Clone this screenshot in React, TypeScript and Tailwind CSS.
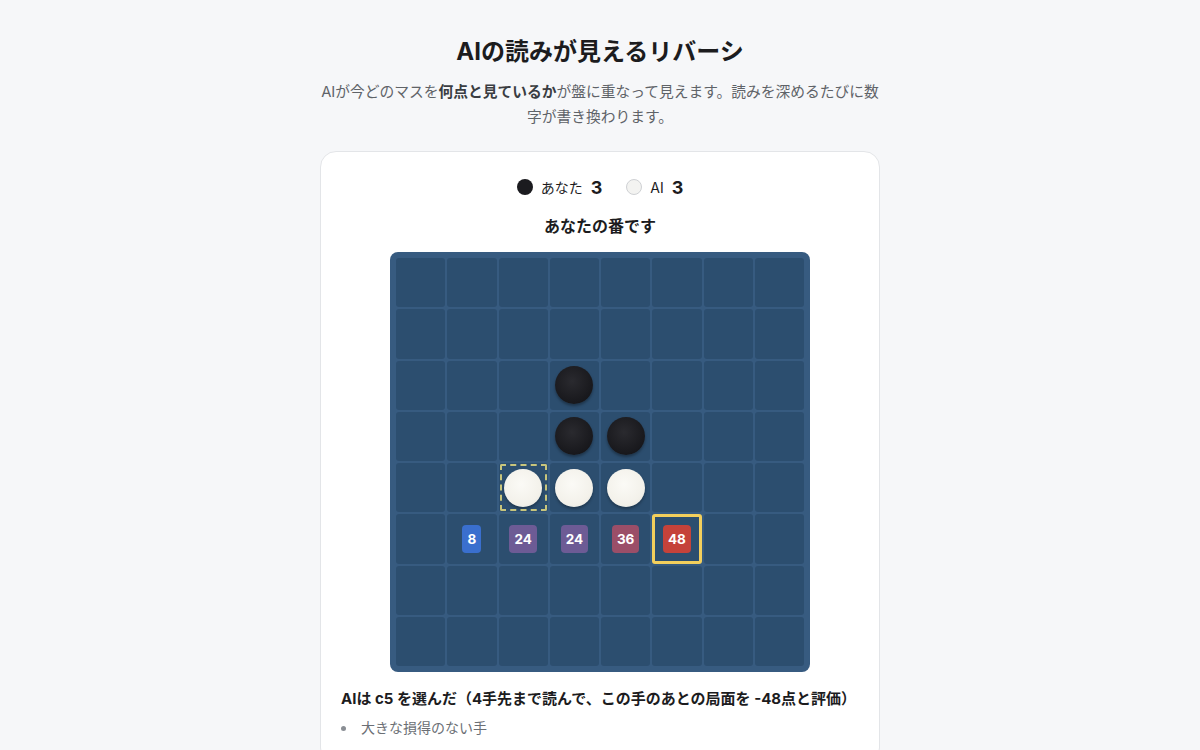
import React from "react";

type Cell = "B" | "W" | null;

const FONT = 'Inter, "Noto Sans CJK JP", "Noto Sans", sans-serif';

// 8x8 board, rows top to bottom
const board: Cell[][] = Array.from({ length: 8 }, () => Array(8).fill(null));
board[2][3] = "B";
board[3][3] = "B";
board[3][4] = "B";
board[4][2] = "W";
board[4][3] = "W";
board[4][4] = "W";

// AI evaluation of the candidate cells
const scores: Record<string, { value: number; color: string }> = {
  "5-1": { value: 8, color: "bg-[#3a6fce]" },
  "5-2": { value: 24, color: "bg-[#6d5b95]" },
  "5-3": { value: 24, color: "bg-[#6d5b95]" },
  "5-4": { value: 36, color: "bg-[#9b4e68]" },
  "5-5": { value: 48, color: "bg-[#c5423a]" },
};

const bestMove = "5-5";
const lastMove = "4-2";

const Disc = ({ color }: { color: "B" | "W" }) =>
  color === "B" ? (
    <div className="h-[38px] w-[38px] rounded-full bg-[radial-gradient(circle_at_45%_40%,#2a2a2f_0%,#18181c_70%,#101013_100%)] shadow-[0_2px_3px_rgba(0,0,0,0.35)]" />
  ) : (
    <div className="h-[38px] w-[38px] rounded-full bg-[radial-gradient(circle_at_45%_40%,#fbfaf6_0%,#f3f1ea_65%,#e2dfd6_100%)] shadow-[0_2px_3px_rgba(0,0,0,0.3)]" />
  );

const BoardCell = ({ row, col }: { row: number; col: number }) => {
  const key = `${row}-${col}`;
  const piece = board[row][col];
  const score = scores[key];
  const isBest = key === bestMove;
  const isLast = key === lastMove;

  return (
    <div
      className={
        "relative flex aspect-square items-center justify-center rounded-[3px] bg-[#2c4e6f]" +
        (isBest ? " border-[3px] border-[#f3cf5c]" : "")
      }
    >
      {isLast && (
        <div className="absolute inset-[1px] rounded-[2px] border-2 border-dashed border-[#c8c57c]" />
      )}
      {piece && <Disc color={piece} />}
      {score && (
        <span
          className={`flex h-7 min-w-[19px] items-center justify-center rounded-[4px] px-[5px] text-[13.5px] font-bold text-white ${score.color}`}
        >
          {score.value}
        </span>
      )}
    </div>
  );
};

export default function App() {
  return (
    <div
      className="min-h-screen bg-[#f6f7f9] pt-[36px] text-[#1c1c1e]"
      style={{ fontFamily: FONT }}
    >
      <h1 className="text-center text-[24px] font-bold leading-[32px]">
        AIの読みが見えるリバーシ
      </h1>
      <p className="mx-auto mt-[12px] w-[560px] text-center text-[14.75px] leading-[25px] text-[#5f6368]">
        AIが今どのマスを<strong className="font-bold text-[#3a3d42]">何点と見ているか</strong>
        が盤に重なって見えます。読みを深めるたびに数字が書き換わります。
      </p>

      <div className="mx-auto mt-[21px] w-[560px] rounded-2xl border border-[#e3e5e8] bg-white px-5 pb-6 pt-6">
        <div className="flex h-[22px] items-center justify-center gap-6">
          <div className="flex items-center gap-2">
            <span className="h-4 w-4 rounded-full bg-[#1b1b1f]" />
            <span className="text-[14px]">あなた</span>
            <span className="text-[18px] font-bold">3</span>
          </div>
          <div className="flex items-center gap-2">
            <span className="h-4 w-4 rounded-full border border-[#cfd1d4] bg-[#f3f3f1]" />
            <span className="text-[14px]">AI</span>
            <span className="text-[18px] font-bold">3</span>
          </div>
        </div>

        <div className="mt-[16px] text-center text-[16px] font-bold leading-[24px]">
          あなたの番です
        </div>

        <div className="mx-auto mt-[14px] grid w-[420px] grid-cols-8 gap-[2px] rounded-lg bg-[#375b80] p-[6px]">
          {board.map((cells, r) =>
            cells.map((_, c) => <BoardCell key={`${r}-${c}`} row={r} col={c} />),
          )}
        </div>

        <div className="mt-[16px] text-[15px] font-bold leading-[22px]">
          AIは c5 を選んだ（4手先まで読んで、この手のあとの局面を -48点と評価）
        </div>
        <ul className="mt-[7px] list-inside list-disc pl-0 text-[14px] leading-[22px] text-[#6b6f75] marker:text-[#8a8e94]">
          <li>大きな損得のない手</li>
        </ul>
      </div>
    </div>
  );
}
